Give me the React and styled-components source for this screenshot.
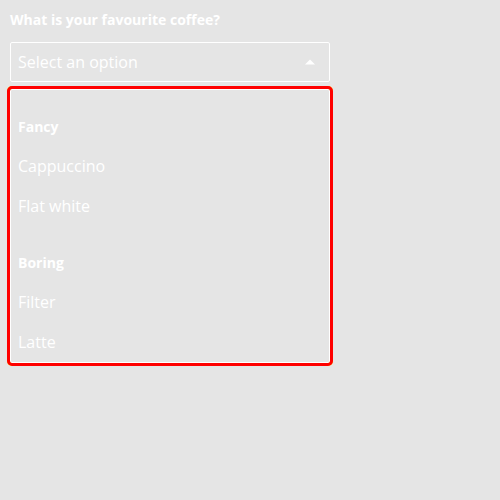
import React from "react";
import styled, { createGlobalStyle } from "styled-components";

const Global = createGlobalStyle`
  html, body { margin: 0; padding: 0; background: #e5e5e5; }
  body { font-family: "Open Sans", "Noto Sans", sans-serif; color: #fff; }
`;

const Page = styled.div`
  padding: 10px;
  width: 320px;
`;

const Label = styled.div`
  font-size: 14px;
  font-weight: 700;
  line-height: 20px;
  margin-bottom: 12px;
`;

const Trigger = styled.div`
  box-sizing: border-box;
  height: 40px;
  border: 1px solid #fff;
  border-radius: 2px;
  display: flex;
  align-items: center;
  justify-content: space-between;
  padding: 0 14px 0 7px;
  font-size: 16px;
`;

const Arrow = styled.svg`
  display: block;
`;

const Listbox = styled.div`
  box-sizing: border-box;
  margin-top: 7px;
  border: 1px solid #fff;
  border-radius: 2px;
  outline: 3px solid #ff0000;
  outline-offset: 0;
  box-shadow: 0 0 0 3px #ffff00;
  display: flex;
  flex-direction: column;
`;

const Group = styled.div`
  padding-top: 16px;
  display: flex;
  flex-direction: column;
`;

const GroupLabel = styled.div`
  height: 40px;
  display: flex;
  align-items: center;
  padding-left: 7px;
  font-size: 14px;
  font-weight: 700;
`;

const Option = styled.div`
  height: 40px;
  display: flex;
  align-items: center;
  padding-left: 7px;
  font-size: 16px;
  color: #fff;
`;

const groups = [
  { name: "Fancy", options: ["Cappuccino", "Flat white"] },
  { name: "Boring", options: ["Filter", "Latte"] },
];

export default function App() {
  return (
    <Page>
      <Global />
      <Label>What is your favourite coffee?</Label>
      <Trigger>
        <span>Select an option</span>
        <Arrow width="10" height="6" viewBox="0 0 10 6">
          <path d="M5 0.5 L10 5.5 L0 5.5 Z" fill="#fff" />
        </Arrow>
      </Trigger>
      <Listbox>
        {groups.map((g) => (
          <Group key={g.name}>
            <GroupLabel>{g.name}</GroupLabel>
            {g.options.map((o) => (
              <Option key={o}>{o}</Option>
            ))}
          </Group>
        ))}
      </Listbox>
    </Page>
  );
}
